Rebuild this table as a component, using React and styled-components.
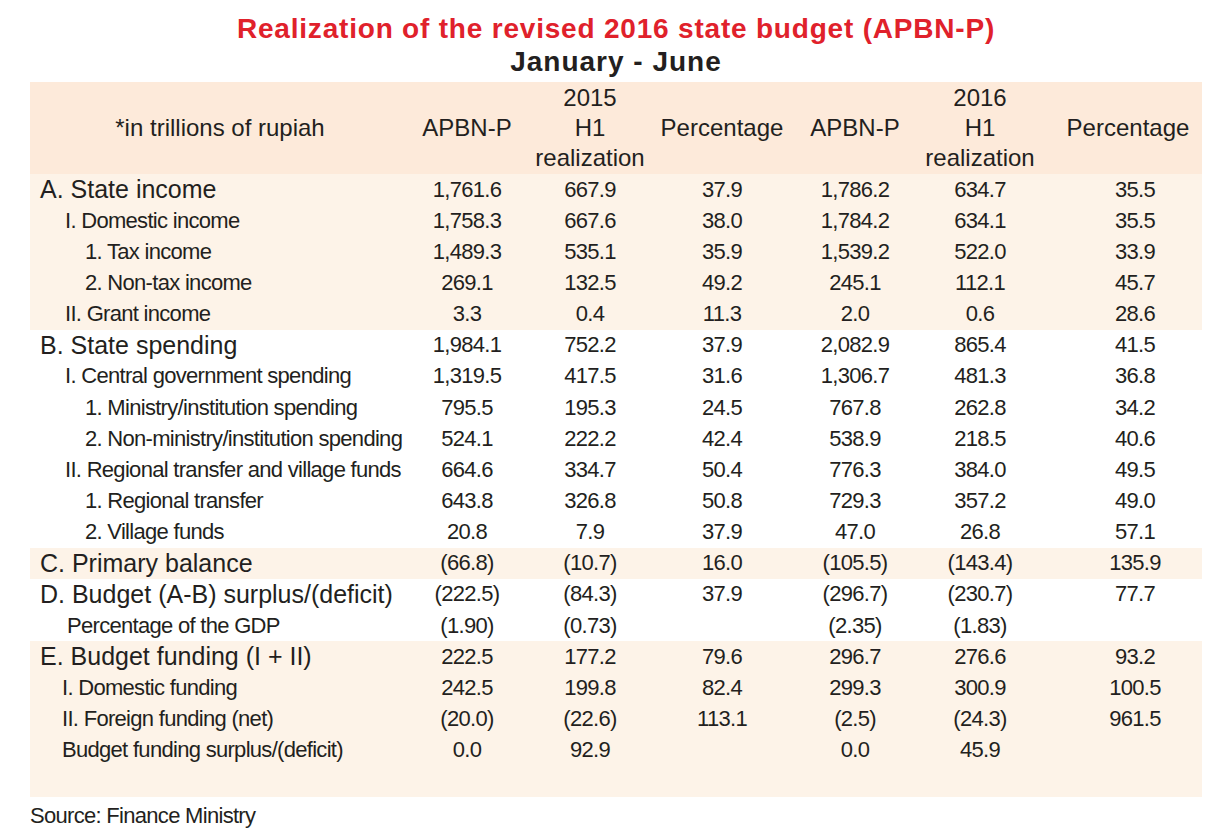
import React from 'react';
import styled, { createGlobalStyle } from 'styled-components';

const GlobalStyle = createGlobalStyle`
  html, body {
    margin: 0;
    padding: 0;
    background: #ffffff;
  }
  body {
    font-family: "Liberation Sans", Arial, sans-serif;
    color: #231f20;
  }
`;

const COLS = '380px 114px 132px 132px 134px 116px 164px';

const sections = [
  {
    tint: true,
    rows: [
      ['A. State income', '1,761.6', '667.9', '37.9', '1,786.2', '634.7', '35.5', 'section'],
      ['I. Domestic income', '1,758.3', '667.6', '38.0', '1,784.2', '634.1', '35.5', 'one'],
      ['1. Tax income', '1,489.3', '535.1', '35.9', '1,539.2', '522.0', '33.9', 'two'],
      ['2. Non-tax income', '269.1', '132.5', '49.2', '245.1', '112.1', '45.7', 'two'],
      ['II. Grant income', '3.3', '0.4', '11.3', '2.0', '0.6', '28.6', 'one'],
    ],
  },
  {
    tint: false,
    rows: [
      ['B. State spending', '1,984.1', '752.2', '37.9', '2,082.9', '865.4', '41.5', 'section'],
      ['I. Central government spending', '1,319.5', '417.5', '31.6', '1,306.7', '481.3', '36.8', 'one'],
      ['1. Ministry/institution spending', '795.5', '195.3', '24.5', '767.8', '262.8', '34.2', 'two'],
      ['2. Non-ministry/institution spending', '524.1', '222.2', '42.4', '538.9', '218.5', '40.6', 'two'],
      ['II. Regional transfer and village funds', '664.6', '334.7', '50.4', '776.3', '384.0', '49.5', 'one'],
      ['1. Regional transfer', '643.8', '326.8', '50.8', '729.3', '357.2', '49.0', 'two'],
      ['2. Village funds', '20.8', '7.9', '37.9', '47.0', '26.8', '57.1', 'two'],
    ],
  },
  {
    tint: true,
    rows: [
      ['C. Primary balance', '(66.8)', '(10.7)', '16.0', '(105.5)', '(143.4)', '135.9', 'section'],
    ],
  },
  {
    tint: false,
    rows: [
      ['D. Budget (A-B) surplus/(deficit)', '(222.5)', '(84.3)', '37.9', '(296.7)', '(230.7)', '77.7', 'section'],
      ['Percentage of the GDP', '(1.90)', '(0.73)', '', '(2.35)', '(1.83)', '', 'gdp'],
    ],
  },
  {
    tint: true,
    rows: [
      ['E. Budget funding (I + II)', '222.5', '177.2', '79.6', '296.7', '276.6', '93.2', 'section'],
      ['I. Domestic funding', '242.5', '199.8', '82.4', '299.3', '300.9', '100.5', 'fund'],
      ['II. Foreign funding (net)', '(20.0)', '(22.6)', '113.1', '(2.5)', '(24.3)', '961.5', 'fund'],
      ['Budget funding surplus/(deficit)', '0.0', '92.9', '', '0.0', '45.9', '', 'fund'],
      ['', '', '', '', '', '', '', 'fund'],
    ],
  },
];

const indent = { section: 10, one: 35, two: 55, gdp: 37, fund: 32 };

const App = () => (
  <Page>
    <GlobalStyle />
    <Heading>
      <Title>Realization of the revised 2016 state budget (APBN-P)</Title>
      <Subtitle>January - June</Subtitle>
    </Heading>
    <Table>
      <HeadRow>
        <HeadCell>*in trillions of rupiah</HeadCell>
        <HeadCell>APBN-P</HeadCell>
        <HeadCell>
          <span>2015</span>
          <span>H1</span>
          <span>realization</span>
        </HeadCell>
        <HeadCell>Percentage</HeadCell>
        <HeadCell>APBN-P</HeadCell>
        <HeadCell>
          <span>2016</span>
          <span>H1</span>
          <span>realization</span>
        </HeadCell>
        <HeadCell>Percentage</HeadCell>
      </HeadRow>
      {sections.map((sec, i) => (
        <Section key={i} $tint={sec.tint}>
          {sec.rows.map((r, j) => (
            <Row key={j}>
              <Label $level={r[7]}>{r[0]}</Label>
              {r.slice(1, 7).map((v, k) => (
                <Num key={k}>{v}</Num>
              ))}
            </Row>
          ))}
        </Section>
      ))}
    </Table>
    <Source>Source: Finance Ministry</Source>
  </Page>
);

const Page = styled.div`
  width: 1229px;
  padding-top: 12px;
`;

const Heading = styled.div`
  display: flex;
  flex-direction: column;
  align-items: center;
  width: 1172px;
  margin-left: 30px;
`;

const Title = styled.h1`
  margin: 0;
  color: #e0212b;
  font-family: "Liberation Sans", Arial, sans-serif;
  font-size: 28px;
  font-weight: 700;
  letter-spacing: 0.8px;
  line-height: 33px;
`;

const Subtitle = styled.h2`
  margin: 0;
  color: #231f20;
  font-family: "Liberation Sans", Arial, sans-serif;
  font-size: 28px;
  font-weight: 700;
  letter-spacing: 1px;
  line-height: 33px;
`;

const Table = styled.div`
  margin: 4px 0 0 30px;
  width: 1172px;
`;

const HeadRow = styled.div`
  display: grid;
  grid-template-columns: ${COLS};
  height: 92px;
  background: #fdeada;
`;

const HeadCell = styled.div`
  display: flex;
  flex-direction: column;
  align-items: center;
  justify-content: center;
  font-size: 24px;
  line-height: 30px;
  text-align: center;
  &:last-child { padding-left: 16px; }
`;

const Section = styled.div`
  background: ${({ $tint }) => ($tint ? '#fdf3e8' : '#ffffff')};
`;

const Row = styled.div`
  display: grid;
  grid-template-columns: ${COLS};
  height: 31.15px;
  align-items: center;
`;

const Label = styled.div`
  padding-left: ${({ $level }) => indent[$level]}px;
  font-size: ${({ $level }) => ($level === 'section' ? 25 : 22)}px;
  letter-spacing: ${({ $level }) => ($level === 'section' ? 0 : -0.7)}px;
  white-space: nowrap;
`;

const Num = styled.div`
  text-align: center;
  font-size: 22px;
  letter-spacing: -0.7px;
  white-space: nowrap;
  &:last-child { padding-left: 30px; }
`;

const Source = styled.div`
  margin: 6px 0 0 30px;
  font-size: 22px;
  letter-spacing: -0.7px;
  line-height: 26px;
`;

export default App;
